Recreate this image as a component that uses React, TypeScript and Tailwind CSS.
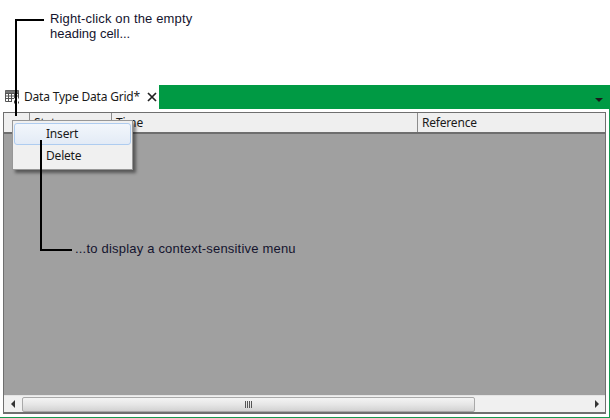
import React from "react";

const ui = "font-['Noto_Sans',sans-serif] text-[12px] tracking-[-0.2px] text-[#1a1a1a]";

function GridIcon() {
  return (
    <svg width="15" height="16" viewBox="0 0 15 16" className="shrink-0">
      <path d="M0.5 1.5H13.5V10.5M0.5 1.5V12.5H7M0.5 4.5H13.5M0.5 7H13M0.5 9.5H9M3.5 1.5V12.5M6.5 1.5V12.5M9.5 1.5V9.5" stroke="#555" fill="none" strokeWidth="1" />
      <path d="M0.5 1.5H13.5V4H0.5Z" fill="#777" />
      <path d="M9 9.5H14.5V15H9Z" fill="#fff" />
      <path d="M9.5 14.5V11.5M11.5 14.5V10.5M13.5 14.5V12.5" stroke="#444" fill="none" />
    </svg>
  );
}

function HeaderCell({ className, children }: { className: string; children?: React.ReactNode }) {
  return (
    <div className={`flex items-center pl-1 pt-[1px] border-r border-[#8c8c8c] overflow-hidden ${className}`}>{children}</div>
  );
}

export default function App() {
  return (
    <div className="relative w-[610px] h-[418px] bg-white overflow-hidden">
      {/* top annotation */}
      <div className="h-[85px] pl-[50px] pt-[11px] font-['Liberation_Sans',sans-serif] text-[13px] leading-[15px] text-[#14142e]">
        <div className="tracking-[0.15px]">Right-click on the empty</div>
        <div>heading cell...</div>
      </div>

      {/* tab strip */}
      <div className="flex h-[24px]">
        <div className={`flex items-center w-[159px] pl-[5px] ${ui}`}>
          <GridIcon />
          <span className="ml-[4px] whitespace-nowrap">Data Type Data Grid*</span>
          <svg width="10" height="10" viewBox="0 0 10 10" className="ml-[7px] shrink-0">
            <path d="M1 1L9 9M9 1L1 9" stroke="#222" strokeWidth="1.7" />
          </svg>
        </div>
        <div className="flex-1 bg-[#009a44] flex items-end justify-end pr-[7px] pb-[7px]">
          <div className="w-0 h-0 border-x-[4px] border-x-transparent border-t-[4px] border-t-[#1a1a1a]" />
        </div>
      </div>

      {/* panel frame */}
      <div className="h-[309px] w-[610px] border-r border-b border-[#149a50] pt-[3px] pl-[3px] pr-[3px] pb-[3px] bg-white">
        <div className="h-[302px] w-[603px] border border-[#6f6f6f] border-b-2 flex flex-col">
          <div className={`flex h-[21px] bg-[#efefef] border-b-2 border-[#6e6e6e] shrink-0 ${ui}`}>
            <HeaderCell className="w-[26px]" />
            <HeaderCell className="w-[82px]">State</HeaderCell>
            <HeaderCell className="w-[306px]">Time</HeaderCell>
            <div className="flex-1 flex items-center pl-1 pt-[1px]">Reference</div>
          </div>
          <div className="flex-1 bg-[#a0a0a0]" />
          <div className="h-[17px] shrink-0 flex items-center bg-[#f0f0f0] border-t border-[#e4e4e4]">
            <div className="w-[18px] flex justify-center">
              <div className="w-0 h-0 border-y-[4px] border-y-transparent border-r-[4px] border-r-[#333]" />
            </div>
            <div className="w-[453px] h-[15px] rounded-[2px] border border-[#a9a9a9] bg-gradient-to-b from-[#f4f4f4] via-[#e6e6e6] to-[#d2d2d2] flex items-center justify-center">
              <div className="flex gap-[1px]">
                <div className="w-[1px] h-[7px] bg-[#555]" />
                <div className="w-[1px] h-[7px] bg-[#555]" />
                <div className="w-[1px] h-[7px] bg-[#555]" />
                <div className="w-[1px] h-[7px] bg-[#555]" />
              </div>
            </div>
            <div className="flex-1 flex justify-end pr-[6px]">
              <div className="w-0 h-0 border-y-[4px] border-y-transparent border-l-[4px] border-l-[#333]" />
            </div>
          </div>
        </div>
      </div>

      {/* context menu */}
      <div className={`absolute left-[12px] top-[120px] w-[121px] h-[50px] bg-[#f0f0f0] border border-[#979797] shadow-[3px_3px_3px_rgba(0,0,0,0.45)] pl-[1px] pr-[1px] pt-[2px] ${ui}`}>
        <div className="h-[22px] flex items-center pl-[31px] rounded-[3px] border border-[#aeccf0] bg-gradient-to-b from-[#f2f6fb] to-[#e3ebf6]">Insert</div>
        <div className="h-[22px] flex items-center pl-[32px]">Delete</div>
      </div>

      {/* callout lines */}
      <div className="absolute left-[15px] top-[19px] w-[29px] h-[97px] border-l-2 border-t-2 border-black" />
      <div className="absolute left-[40px] top-[140px] w-[32px] h-[111px] border-l-2 border-b-2 border-black" />
      <div className="absolute left-[75px] top-[241px] font-['Liberation_Sans',sans-serif] text-[13px] leading-[15px] text-[#14142e] tracking-[0.2px] whitespace-nowrap">...to display a context-sensitive menu</div>
    </div>
  );
}
